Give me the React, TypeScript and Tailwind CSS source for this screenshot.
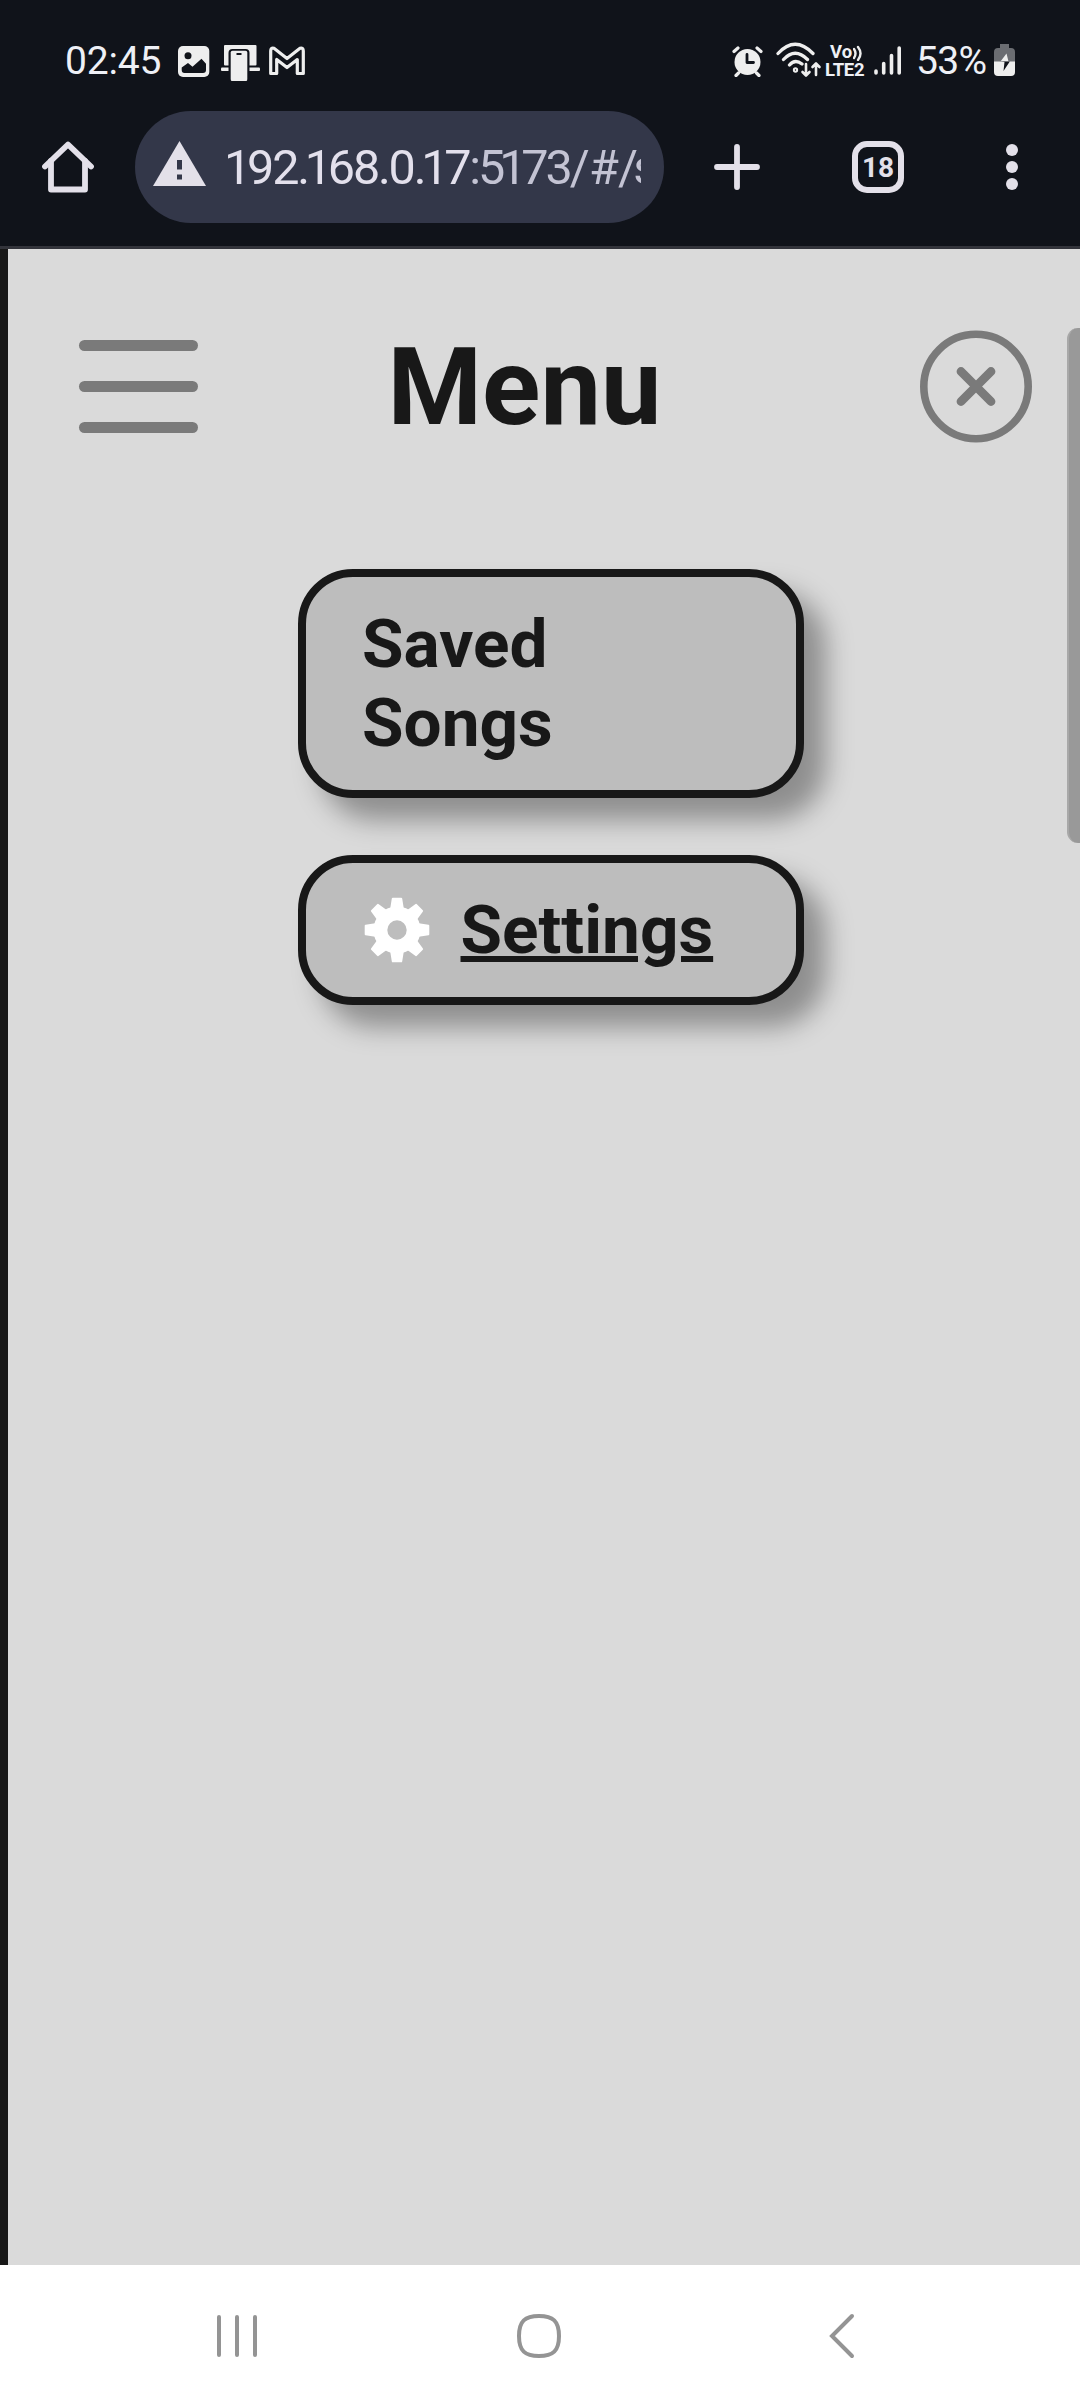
import type { ReactNode } from 'react';

const gearAngles = [0, 45, 90, 135, 180, 225, 270, 315];

function StatusBar() {
  return (
    <div className="flex h-[100px] shrink-0 items-start pl-[65px] pr-[64px] text-[#eef0f6]">
      <span className="mt-[38px] w-[113px] text-[39px] leading-[46px] tracking-[-0.2px]">02:45</span>
      <svg className="mt-[46px] h-[32px] w-[32px]" viewBox="0 0 32 32">
        <rect x="0" y="0" width="31.3" height="31" rx="5" fill="#eee" />
        <circle cx="10" cy="9.7" r="3.5" fill="#10131a" />
        <path d="M3.7 21.5 10 17l4.500 3.700 9-8 4.500 5V24q0 3-3 3H6.500q-2.800 0-2.800-3z" fill="#10131a" />
      </svg>
      <svg className="ml-[11px] mt-[44px] h-[38px] w-[39px]" viewBox="0 0 39 38">
        <rect x="3" y="1" width="32.500" height="20.500" rx="1" fill="#eee" />
        <rect x="0" y="23.500" width="39" height="3.500" rx="1" fill="#eee" />
        <path d="M7.500 38V9q0-4 4-4h13q4 0 4 4v29z" fill="#10131a" />
        <path d="M9.700 35V8.500q0-1.800 1.800-1.800h13q1.800 0 1.800 1.800V35q0 2-1 2H10.700q-1 0-1-2z" fill="#eee" />
        <path d="M15.500 10h5" stroke="#10131a" strokeWidth="2" />
      </svg>
      <svg className="ml-[9px] mt-[45.500px] h-[30px] w-[37px]" viewBox="0 0 37 30" fill="none" stroke="#eee" strokeWidth="3.200" strokeLinejoin="round">
        <path d="M1.700 5Q1.700 1.200 5 2.300L18 12.500 31 2.300q3.300-1 3.300 2.700v22.500h-6V13.500L18 21.500 7.700 13.500v14h-6z" />
      </svg>
      <svg className="ml-auto mt-[45px] h-[32px] w-[31px]" viewBox="0 0 31 32">
        <path d="M2 6.500 6 3M29 6.500 25 3M6.500 28 4 30.500M24.500 28 27 30.500" stroke="#eee" strokeWidth="3.200" strokeLinecap="round" />
        <circle cx="15.500" cy="17" r="13" fill="#eee" />
        <path d="M15 9.500v8h6.500" stroke="#10131a" strokeWidth="2.800" strokeLinecap="round" strokeLinejoin="round" fill="none" />
      </svg>
      <svg className="ml-[13px] mt-[42px] h-[36px] w-[46px]" viewBox="0 0 46 36" fill="none" stroke="#eee" strokeWidth="3.300" strokeLinecap="round" strokeLinejoin="round">
        <path d="M2 11.500Q19-7 37 11.500M7.500 17.500Q19 5 31.500 17.500M13.500 23Q19 16.500 26 22" />
        <circle cx="19.500" cy="28" r="1" />
        <path d="M30 22v11M26.500 30l3.500 3.500 3.500-3.500M40 33V22M36.500 25l3.500-3.500 3.500 3.500" strokeWidth="2.600" />
      </svg>
      <div className="ml-[3px] mt-[44px] flex w-[43px] flex-col text-[18.500px] font-bold leading-[17.500px]">
        <span className="flex items-start pl-[5px]">
          Vo
          <svg className="ml-[1px] mt-[1px] h-[16px] w-[10px]" viewBox="0 0 10 16" fill="none" stroke="#eee" strokeWidth="2.400" strokeLinecap="round">
            <path d="M1 4q3 4.500 0 9M5 2q5 6.500 0 13" />
          </svg>
        </span>
        <span className="tracking-[-0.3px]">LTE2</span>
      </div>
      <svg className="ml-[6px] mt-[46px] h-[30px] w-[28px]" viewBox="0 0 28 30" stroke="#eee" strokeWidth="3.600" strokeLinecap="round">
        <path d="M2 25v2M9.700 17.500V27M17.500 9.500V27" />
        <path d="M25.200 2v25" />
      </svg>
      <span className="ml-[14px] mt-[38px] w-[78px] text-[39px] leading-[46px] tracking-[-0.700px]">53%</span>
      <svg className="mt-[44px] h-[32px] w-[22px]" viewBox="0 0 22 32">
        <path d="M6 0h9v4h2q4 0 4 4v10H0V8q0-4 4-4h2z" fill="#6b6d72" />
        <path d="M0 17.500h21V28q0 4-4 4H4q-4 0-4-4z" fill="#eee" />
        <path d="M12.500 9.500 6.500 17.500h8z" fill="#eee" />
        <path d="M5.500 18h5L9.500 27l6.300-9.500h-5z" fill="#10131a" />
      </svg>
    </div>
  );
}

// Proportional figures: the digit 1 takes less room than the others.
function Url({ text }: { text: string }) {
  return (
    <>
      {text.split('').map((c, i) =>
        c === '1' ? (
          <span key={i} className="-ml-[3px] -mr-[2px] first:ml-0">1</span>
        ) : (
          <span key={i}>{c}</span>
        ),
      )}
    </>
  );
}

function BrowserBar() {
  return (
    <div className="flex h-[149px] shrink-0 items-start border-b-[3px] border-[#33343b] pl-[42px] pr-[62px] pt-[11px]">
      <svg className="mt-[30px] h-[52px] w-[52px]" viewBox="0 0 52 52" fill="none" stroke="#e3e0e9" strokeWidth="5.800" strokeLinecap="round" strokeLinejoin="round">
        <path d="M3 25.500 26 3.500 49 25.500" />
        <path d="M9 20v28.500h34V20" />
      </svg>
      <div className="ml-[41px] flex h-[112px] w-[529px] items-center rounded-full bg-[#333749] pl-[18px]">
        <svg className="mb-[7px] h-[45px] w-[53px] shrink-0" viewBox="0 0 53 45">
          <path d="M26.500 0 53 45H0z" fill="#e3e0e9" />
          <path d="M24 19h5v9.500h-5zM24 33.500h5v5h-5z" fill="#333749" />
        </svg>
        <div className="ml-[18px] mt-[1px] h-[60px] w-[417px] overflow-hidden whitespace-nowrap text-[48.500px] leading-[60px] text-[#e3e0ec]">
          <span className="tracking-[-2.200px]">
            <Url text="192.168.0.17" />
          </span>
          <span className="tracking-[-3.100px] text-[#c3c3d3]">
            <Url text=":5173" />
          </span>
          <span className="tracking-[-0.800px] text-[#c3c3d3]">/#/</span>
          <span className="-ml-[4px] text-[#c3c3d3]">s</span>
        </div>
      </div>
      <svg className="ml-[50px] mt-[33px] h-[46px] w-[46px]" viewBox="0 0 46 46" stroke="#e3e0e9" strokeWidth="5.800" strokeLinecap="round">
        <path d="M23 3v40M3 23h40" />
      </svg>
      <div className="ml-[92px] mt-[30px] flex h-[52px] w-[52px] items-center justify-center rounded-[15px] border-[6px] border-[#e3e0e9] pt-[1px] text-[28px] font-bold leading-none text-[#e3e0e9]">
        18
      </div>
      <svg className="ml-auto mt-[33px] h-[46px] w-[12px]" viewBox="0 0 12 46" fill="#e3e0e9">
        <circle cx="6" cy="6" r="6" />
        <circle cx="6" cy="23" r="6" />
        <circle cx="6" cy="40" r="6" />
      </svg>
    </div>
  );
}

function MenuCard({ children }: { children: ReactNode }) {
  return (
    <div className="flex w-[506px] items-center rounded-[55px] border-8 border-[#181818] bg-[#bdbdbd] px-[54px] py-[27.500px] text-[67.500px] font-bold leading-[79px] shadow-[22px_22px_27px_rgba(0,0,0,0.35)]">
      {children}
    </div>
  );
}

function GearIcon() {
  return (
    <svg className="ml-[4px] h-[66px] w-[66px] shrink-0" viewBox="-33 -33 66 66" fill="#fff" stroke="#fff">
      <circle r="16.600" fill="none" strokeWidth="13.800" />
      {gearAngles.map((a) => (
        <path key={a} transform={`rotate(${a})`} d="M-4.200-31.300H4.200L6-20H-6z" strokeWidth="2" strokeLinejoin="round" />
      ))}
    </svg>
  );
}

function MenuPage() {
  return (
    <main className="relative flex h-[2016px] shrink-0 flex-col border-l-8 border-[#171717] bg-[#dadada] text-[#181818]">
      <header className="flex h-[320px] items-start pl-[71px] pr-[48px] pt-[81px]">
        <div className="mt-[10px] flex w-[119px] flex-col gap-[29.500px]">
          <span className="h-[11.300px] rounded-full bg-[#7a7a7a]" />
          <span className="h-[11.300px] rounded-full bg-[#7a7a7a]" />
          <span className="h-[11.300px] rounded-full bg-[#7a7a7a]" />
        </div>
        <h1 className="ml-[189.500px] mt-[1px] text-[108px] font-bold leading-[112px]">Menu</h1>
        <svg className="ml-auto h-[113px] w-[112px]" viewBox="0 0 112 113" fill="none" stroke="#7a7a7a">
          <circle cx="56" cy="56.500" r="52.200" strokeWidth="7.600" />
          <path d="m41 41.500 30 30m0-30-30 30" strokeWidth="8.800" strokeLinecap="round" />
        </svg>
      </header>
      <nav className="ml-[290px] flex flex-col gap-[56.500px]">
        <MenuCard>
          <span className="-mt-[1px] mb-[1px] ml-[2px] w-[200px]">Saved Songs</span>
        </MenuCard>
        <MenuCard>
          <GearIcon />
          <span className="ml-[30.500px] underline decoration-[6px]">Settings</span>
        </MenuCard>
      </nav>
      <div className="absolute right-0 top-[79px] h-[515px] w-[13px] rounded-l-[11px] border-l-2 border-[#a8a8a8] bg-[#999]" />
    </main>
  );
}

function NavigationBar() {
  return (
    <div className="flex h-[135px] items-start bg-white pl-[217px] pr-[225px] pt-[48px]">
      <svg className="h-[46px] w-[40px]" viewBox="0 0 40 46" stroke="#949494" strokeWidth="4" strokeLinecap="round">
        <path d="M2 4v38M20 4v38M38 4v38" />
      </svg>
      <svg className="ml-[260px] h-[46px] w-[44px]" viewBox="0 0 44 46" fill="none" stroke="#949494" strokeWidth="4">
        <path d="M22 3C36 3 42 8 42 23S36 43 22 43 2 38 2 23 8 3 22 3z" />
      </svg>
      <svg className="ml-auto h-[46px] w-[27px]" viewBox="0 0 27 46" fill="none" stroke="#949494" strokeWidth="4" strokeLinecap="round">
        <path d="M24 3 4 23l20 20" />
      </svg>
    </div>
  );
}

export default function App() {
  return (
    <div className="flex h-[2400px] w-[1080px] flex-col overflow-hidden bg-[#10131a] font-['Roboto',sans-serif]">
      <StatusBar />
      <BrowserBar />
      <MenuPage />
      <NavigationBar />
    </div>
  );
}
